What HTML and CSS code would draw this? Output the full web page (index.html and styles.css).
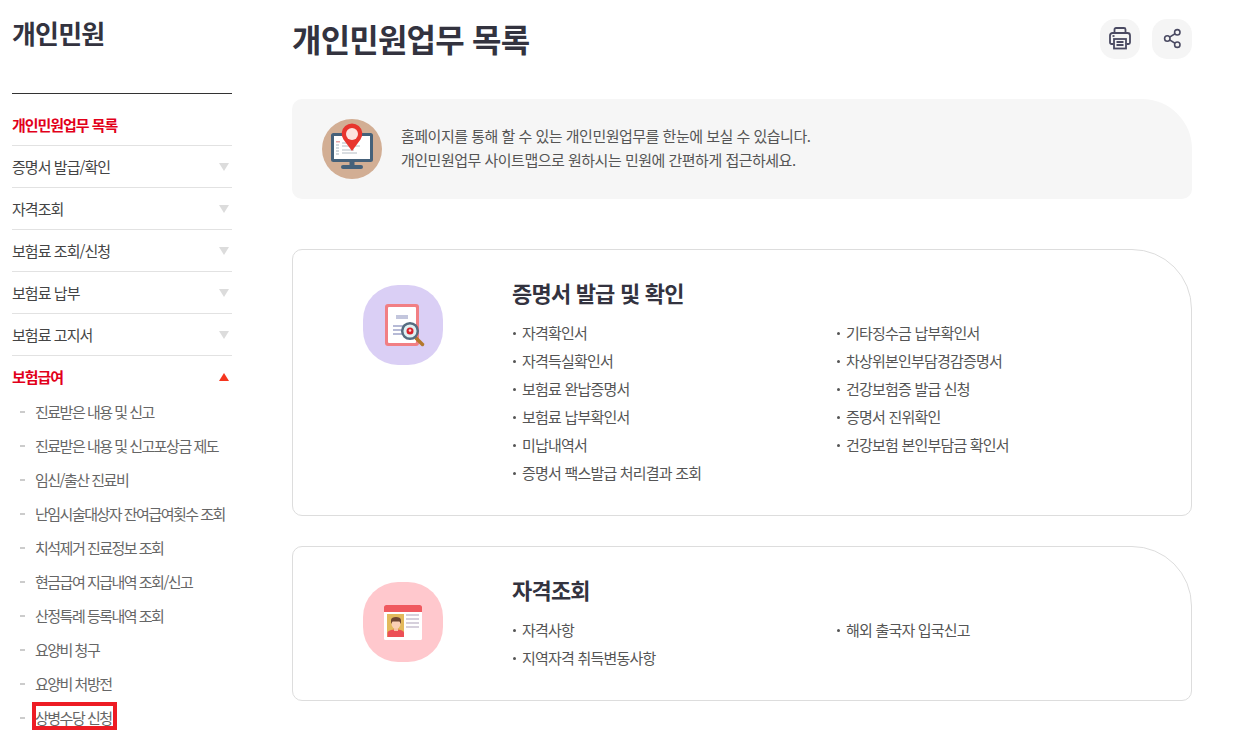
FILE: index.html
```html
<!DOCTYPE html>
<html lang="ko">
<head>
    <meta charset="UTF-8">
    <meta name="viewport" content="width=device-width, initial-scale=1.0">
    <title>개인민원업무 목록</title>
    <link rel="stylesheet" href="styles.css">
</head>
<body>

    <div class="page">
        <aside class="side">
            <h2 class="side-title">개인민원</h2>
            <ul class="menu">
                <li class="menu-item active first"><span>개인민원업무 목록</span></li>
                <li class="menu-item"><span>증명서 발급/확인</span><i class="arrow"></i></li>
                <li class="menu-item"><span>자격조회</span><i class="arrow"></i></li>
                <li class="menu-item"><span>보험료 조회/신청</span><i class="arrow"></i></li>
                <li class="menu-item"><span>보험료 납부</span><i class="arrow"></i></li>
                <li class="menu-item"><span>보험료 고지서</span><i class="arrow"></i></li>
                <li class="menu-item active open"><span>보험급여</span><i class="arrow up"></i></li>
            </ul>
            <ul class="submenu">
                <li>진료받은 내용 및 신고</li>
                <li>진료받은 내용 및 신고포상금 제도</li>
                <li>임신/출산 진료비</li>
                <li>난임시술대상자 잔여급여횟수 조회</li>
                <li>치석제거 진료정보 조회</li>
                <li>현금급여 지급내역 조회/신고</li>
                <li>산정특례 등록내역 조회</li>
                <li>요양비 청구</li>
                <li>요양비 처방전</li>
                <li class="marked">상병수당 신청</li>
            </ul>
        </aside>

        <main class="main">
            <div class="head">
                <h1 class="title">개인민원업무 목록</h1>
                <div class="tools">
                    <button class="tool" aria-label="인쇄">
                        <svg width="24" height="24" viewBox="0 0 24 24" fill="none" stroke="#4a4a62" stroke-width="1.8">
                            <path d="M6.5 6V2.5A1.500 1.500 0 0 1 8 1h8a1.500 1.500 0 0 1 1.500 1.500V6"/>
                            <path d="M5.5 17H3.500A1.500 1.500 0 0 1 2 15.500V8.500A2.500 2.500 0 0 1 4.500 6h15A2.500 2.500 0 0 1 22 8.500v7a1.500 1.500 0 0 1-1.500 1.500h-2"/>
                            <rect x="6" y="12" width="12" height="9.5" fill="#f5f5f5"/>
                            <path d="M8.5 15h7M8.500 18h7"/>
                            <path d="M4.5 9h2"/>
                        </svg>
                    </button>
                    <button class="tool" aria-label="공유">
                        <svg width="24" height="24" viewBox="0 0 24 24" fill="none" stroke="#4a4a62" stroke-width="1.6">
                            <circle cx="17.3" cy="5.3" r="2.7"/>
                            <circle cx="17.3" cy="17.7" r="2.7"/>
                            <circle cx="7.3" cy="11.5" r="2.7"/>
                            <path d="M9.6 10.100l5.400-3.400M9.600 12.900l5.400 3.400"/>
                        </svg>
                    </button>
                </div>
            </div>

            <div class="intro">
                <svg class="intro-icon" width="60" height="60" viewBox="0 0 60 60">
                    <circle cx="30" cy="30" r="30" fill="#d2ae94"/>
                    <rect x="9" y="14" width="42" height="29" rx="2.5" fill="#45617a"/>
                    <rect x="12" y="17" width="36" height="23" fill="#fff"/>
                    <rect x="14" y="22" width="4" height="1.5" fill="#e8a6a6"/>
                    <path d="M14 26h3M14 29h3M14 32h3M14 35h3" stroke="#a9b4bd" stroke-width="1"/>
                    <path d="M20 24h14M20 27h18M20 31h12M20 34h15" stroke="#b4bcc4" stroke-width="1"/>
                    <rect x="27.5" y="42" width="5" height="5" fill="#45617a"/>
                    <rect x="19" y="46" width="22" height="4" rx="2" fill="#45617a"/>
                    <path d="M30 32L21.5 20.5A10.300 10.300 0 1 1 38.500 20.500Z" fill="#e8352e"/>
                    <circle cx="30" cy="15" r="6" fill="#fde3df"/>
                </svg>
                <p class="intro-text">홈페이지를 통해 할 수 있는 개인민원업무를 한눈에 보실 수 있습니다.<br>개인민원업무 사이트맵으로 원하시는 민원에 간편하게 접근하세요.</p>
            </div>

            <section class="card">
                <div class="badge purple">
                    <svg width="44" height="44" viewBox="0 0 44 44">
                        <rect x="4" y="1" width="34" height="42" rx="3" fill="#f17f84"/>
                        <rect x="7" y="4" width="28" height="36" rx="1" fill="#fff"/>
                        <rect x="15" y="12" width="12" height="4" fill="#c3c6dd"/>
                        <path d="M12 23h12M12 27h10M12 31h10" stroke="#b6bad6" stroke-width="1.8"/>
                        <path d="M35 35l6.5 6.5" stroke="#b4782c" stroke-width="3.5" stroke-linecap="round"/>
                        <circle cx="29" cy="28" r="7.8" fill="#dff1f3" stroke="#566c80" stroke-width="2.5"/>
                        <circle cx="29" cy="28" r="3.5" fill="#d8232c"/>
                        <circle cx="29" cy="27.5" r="1.3" fill="#fbd6d6"/>
                    </svg>
                </div>
                <div class="card-body">
                    <h3 class="card-title">증명서 발급 및 확인</h3>
                    <ul class="links">
                        <li>자격확인서</li>
                        <li>기타징수금 납부확인서</li>
                        <li>자격득실확인서</li>
                        <li>차상위본인부담경감증명서</li>
                        <li>보험료 완납증명서</li>
                        <li>건강보험증 발급 신청</li>
                        <li>보험료 납부확인서</li>
                        <li>증명서 진위확인</li>
                        <li>미납내역서</li>
                        <li>건강보험 본인부담금 확인서</li>
                        <li>증명서 팩스발급 처리결과 조회</li>
                    </ul>
                </div>
            </section>

            <section class="card">
                <div class="badge pink">
                    <svg width="44" height="44" viewBox="0 0 44 44">
                        <path d="M3 7.5A2.500 2.500 0 0 1 5.500 5h33A2.500 2.500 0 0 1 41 7.500V12H3Z" fill="#f0595f"/>
                        <path d="M3 12h38v26.500a1.500 1.500 0 0 1-1.500 1.500h-35A1.500 1.500 0 0 1 3 38.500Z" fill="#fff"/>
                        <rect x="6" y="14" width="17" height="23" fill="#e3b95c"/>
                        <path d="M6.5 37v-4c0-2 3.500-3.500 8.500-3.500s8 1.500 8 3.500v4Z" fill="#ec4f56"/>
                        <rect x="13" y="27" width="4" height="4" fill="#f6c3a6"/>
                        <circle cx="15" cy="24" r="4.5" fill="#fbcfb4"/>
                        <path d="M10 24v-4c0-2 2.300-3 5-3s5 1 5 3v4l-1.500-2.500h-7Z" fill="#6e4532"/>
                        <path d="M25 15h13M25 19h13M25 23h13M25 27h13" stroke="#d6d0dc" stroke-width="2"/>
                    </svg>
                </div>
                <div class="card-body">
                    <h3 class="card-title">자격조회</h3>
                    <ul class="links">
                        <li>자격사항</li>
                        <li>해외 출국자 입국신고</li>
                        <li>지역자격 취득변동사항</li>
                    </ul>
                </div>
            </section>
        </main>
    </div>

</body>
</html>
```

FILE: styles.css
```css
html, body {
    height: 730px;
    overflow: hidden;
}

body {
    margin: 0;
    background: #fff;
    color: #333;
    font-family: "Noto Sans CJK KR", "Noto Sans", sans-serif;
}

ul {
    list-style: none;
    margin: 0;
    padding: 0;
}

.page {
    display: flex;
    padding-left: 12px;
    gap: 60px;
}

/* left menu */
.side {
    width: 220px;
    flex: none;
}

.side-title {
    margin: 0;
    height: 94px;
    padding-top: 14px;
    box-sizing: border-box;
    border-bottom: 1px solid #333;
    font-size: 26px;
    line-height: 38px;
    letter-spacing: -0.8px;
    font-weight: 700;
    color: #33333f;
}

.menu-item {
    display: flex;
    justify-content: space-between;
    align-items: center;
    height: 41px;
    border-bottom: 1px solid #e2e2e2;
    font-size: 15px;
    letter-spacing: -0.95px;
    color: #444;
    padding-right: 3px;
}

.menu-item.first {
    padding-top: 10px;
}

.menu-item.active {
    color: #e2001a;
    font-weight: 700;
    letter-spacing: -1.05px;
}

.menu-item.open {
    border-bottom: none;
}

.arrow {
    width: 0;
    height: 0;
    border-left: 5px solid transparent;
    border-right: 5px solid transparent;
    border-top: 8px solid #dcdcdc;
}

.arrow.up {
    border-top: none;
    border-bottom: 8px solid #f5351f;
}

.submenu {
    margin-top: -2px;
    padding-left: 8px;
}

.submenu li {
    position: relative;
    height: 34px;
    line-height: 34px;
    padding-left: 15px;
    font-size: 15px;
    letter-spacing: -1.5px;
    color: #666;
    white-space: nowrap;
}

.submenu li::before {
    content: "";
    position: absolute;
    left: 0;
    top: 16px;
    width: 5px;
    height: 2px;
    background: #ccc;
}

.submenu .marked::after {
    content: "";
    position: absolute;
    left: 12px;
    top: 1px;
    width: 85px;
    height: 28px;
    box-sizing: border-box;
    border: 4px solid #ed1c24;
}

/* main area */
.main {
    width: 900px;
    flex: none;
}

.head {
    display: flex;
    justify-content: space-between;
    align-items: flex-start;
    height: 99px;
}

.title {
    margin: 14px 0 0;
    font-size: 32px;
    line-height: 48px;
    letter-spacing: -0.8px;
    font-weight: 700;
    color: #33333f;
}

.tools {
    display: flex;
    gap: 12px;
    padding-top: 19px;
}

.tool {
    display: flex;
    align-items: center;
    justify-content: center;
    width: 40px;
    height: 40px;
    padding: 0;
    border: none;
    border-radius: 15px;
    background: #f5f5f5;
}

.intro {
    display: flex;
    align-items: center;
    gap: 19px;
    height: 100px;
    padding-left: 30px;
    box-sizing: border-box;
    background: #f6f6f6;
    border-radius: 10px 50px 10px 10px;
}

.intro-text {
    margin: -2px 0 0;
    font-size: 15px;
    line-height: 24px;
    letter-spacing: -0.5px;
    color: #555;
}

.card {
    display: flex;
    margin-top: 30px;
    padding: 35px 0 28px 70px;
    border: 1px solid #ddd;
    border-radius: 10px 60px 10px 10px;
}

.intro + .card {
    margin-top: 50px;
}

.badge {
    flex: none;
    display: flex;
    align-items: center;
    justify-content: center;
    width: 80px;
    height: 80px;
    border-radius: 35px;
}

.badge.purple {
    background: #dacff5;
}

.badge.pink {
    background: #ffc8cd;
}

.card-body {
    flex: 1;
    margin-left: 69px;
}

.card-title {
    margin: -3px 0 17px;
    font-size: 22px;
    line-height: 20px;
    letter-spacing: -0.8px;
    font-weight: 700;
    color: #33333f;
}

.links {
    display: grid;
    grid-template-columns: 324px 1fr;
}

.links li {
    position: relative;
    height: 28px;
    line-height: 28px;
    padding-left: 10px;
    font-size: 15px;
    letter-spacing: -0.8px;
    color: #555;
}

.links li::before {
    content: "";
    position: absolute;
    left: 1px;
    top: 13px;
    width: 3px;
    height: 3px;
    border-radius: 50%;
    background: #555;
}
```
